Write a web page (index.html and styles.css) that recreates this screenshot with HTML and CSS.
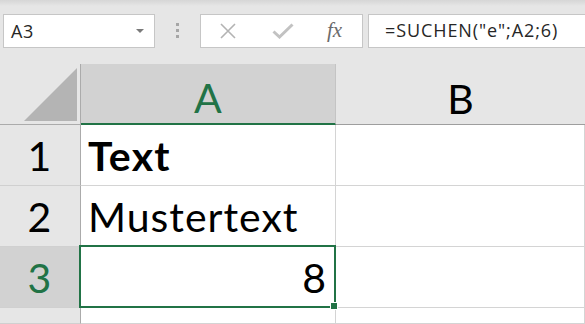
FILE: index.html
```html
<!DOCTYPE html>
<html lang="de">
<head>
  <meta charset="UTF-8" />
  <title>SUCHEN</title>
  <link rel="stylesheet" href="styles.css">
</head>
<body>

  <div class="toolbar">
    <div class="namebox">
      <span class="namebox-text">A3</span>
      <span class="caret"></span>
    </div>
    <div class="grip"><i></i><i></i><i></i></div>
    <div class="fxbox">
      <svg class="icon-x" width="16" height="16" viewBox="0 0 16 16">
        <path d="M1 1 L15 15 M15 1 L1 15" stroke="#b3b3b3" stroke-width="1.6" fill="none" />
      </svg>
      <svg class="icon-ok" width="22" height="16" viewBox="0 0 22 16">
        <path d="M1.5 8.5 L7.5 14 L20.5 1.5" stroke="#c2c2c2" stroke-width="3" fill="none" />
      </svg>
      <span class="fx">fx</span>
    </div>
    <div class="formula">=SUCHEN("e";A2;6)</div>
  </div>

  <div class="sheet">
    <div class="corner"><span class="corner-tri"></span></div>
    <div class="colhead colhead-sel">A</div>
    <div class="colhead">B</div>

    <div class="rowhead">1</div>
    <div class="cell cell-bold">Text</div>
    <div class="cell"></div>

    <div class="rowhead">2</div>
    <div class="cell">Mustertext</div>
    <div class="cell"></div>

    <div class="rowhead rowhead-sel">3</div>
    <div class="cell cell-num cell-active">8</div>
    <div class="cell"></div>

    <div class="rowhead"></div>
    <div class="cell"></div>
    <div class="cell"></div>
  </div>

</body>
</html>
```

FILE: styles.css
```css
body {
  margin: 0;
  padding: 0;
  width: 585px;
  height: 324px;
  overflow: hidden;
  background: #e6e6e6;
  font-family: 'Lato', 'Liberation Sans', sans-serif;
  color: #000;
}

/* formula bar */

.toolbar {
  display: flex;
  align-items: flex-start;
  height: 64px;
  box-sizing: border-box;
  padding: 14px 0 0 3px;
  background: linear-gradient(to bottom, #d6d6d6, #e6e6e6 6px);
}

.namebox {
  display: flex;
  align-items: center;
  justify-content: space-between;
  width: 152px;
  height: 34px;
  box-sizing: border-box;
  padding: 0 10px 0 7px;
  background: #fff;
  border: 1px solid #c6c6c6;
}

.namebox-text {
  font-family: 'Open Sans', sans-serif;
  font-size: 18px;
  letter-spacing: 0.5px;
  color: #262626;
}

.caret {
  width: 0;
  height: 0;
  border-left: 4px solid transparent;
  border-right: 4px solid transparent;
  border-top: 4px solid #7a7a7a;
}

.grip {
  display: flex;
  flex-direction: column;
  align-items: center;
  gap: 3px;
  width: 45px;
  padding-top: 9px;
}

.grip i {
  display: block;
  width: 3px;
  height: 3px;
  background: #a6a6a6;
}

.fxbox {
  display: flex;
  align-items: center;
  width: 163px;
  height: 34px;
  box-sizing: border-box;
  padding-left: 19px;
  background: #fff;
  border: 1px solid #c6c6c6;
}

.icon-x {
  margin-right: 36px;
}

.icon-ok {
  margin-right: 33px;
}

.fx {
  font-family: 'Liberation Serif', serif;
  font-style: italic;
  font-size: 21px;
  color: #6b6b6b;
  margin-top: -2px;
}

.formula {
  flex: 1;
  height: 34px;
  margin: 0 -4px 0 5px;
  box-sizing: border-box;
  padding-left: 16px;
  background: #fff;
  border: 1px solid #c6c6c6;
  font-family: 'Open Sans', sans-serif;
  font-size: 18px;
  letter-spacing: 0.9px;
  line-height: 31px;
  color: #262626;
}

/* grid */

.sheet {
  display: grid;
  grid-template-columns: 81px 255px 1fr;
  grid-template-rows: 61px 61px 61px 61px 1fr;
  height: 260px;
  font-size: 41px;
}

.corner {
  position: relative;
  background: #e6e6e6;
  border-right: 1px solid #ababab;
  border-bottom: 1px solid #ababab;
}

.corner-tri {
  position: absolute;
  left: 24px;
  top: 4px;
  width: 53px;
  height: 53px;
  background: #b4b4b4;
  clip-path: polygon(100% 0, 100% 100%, 0 100%);
}

.colhead {
  display: flex;
  align-items: center;
  justify-content: center;
  box-sizing: border-box;
  padding-top: 8px;
  border-bottom: 1px solid #9e9e9e;
  background: #e6e6e6;
}

.colhead-sel {
  background: #d2d2d2;
  border-right: 1px solid #c4c4c4;
  border-bottom: 2px solid #217346;
  color: #217346;
}

.rowhead {
  display: flex;
  align-items: center;
  justify-content: center;
  padding-right: 1px;
  background: #e6e6e6;
  border-right: 1px solid #ababab;
  border-bottom: 1px solid #d0d0d0;
}

.rowhead-sel {
  background: #d2d2d2;
  color: #217346;
}

.cell {
  display: flex;
  align-items: center;
  padding: 0 9px 0 7px;
  background: #fff;
  border-right: 1px solid #d4d4d4;
  border-bottom: 1px solid #d4d4d4;
  letter-spacing: 1px;
}

.cell-bold {
  font-weight: bold;
  letter-spacing: 1.2px;
}

.cell-num {
  justify-content: flex-end;
  letter-spacing: 0;
}

.cell-active {
  position: relative;
}

.cell-active::before {
  content: "";
  position: absolute;
  left: -2px;
  top: -2px;
  right: -1px;
  bottom: -1px;
  border: 2px solid #217346;
}

.cell-active::after {
  content: "";
  position: absolute;
  right: -3px;
  bottom: -3px;
  width: 6px;
  height: 6px;
  background: #217346;
  border: 1px solid #fff;
}
```
